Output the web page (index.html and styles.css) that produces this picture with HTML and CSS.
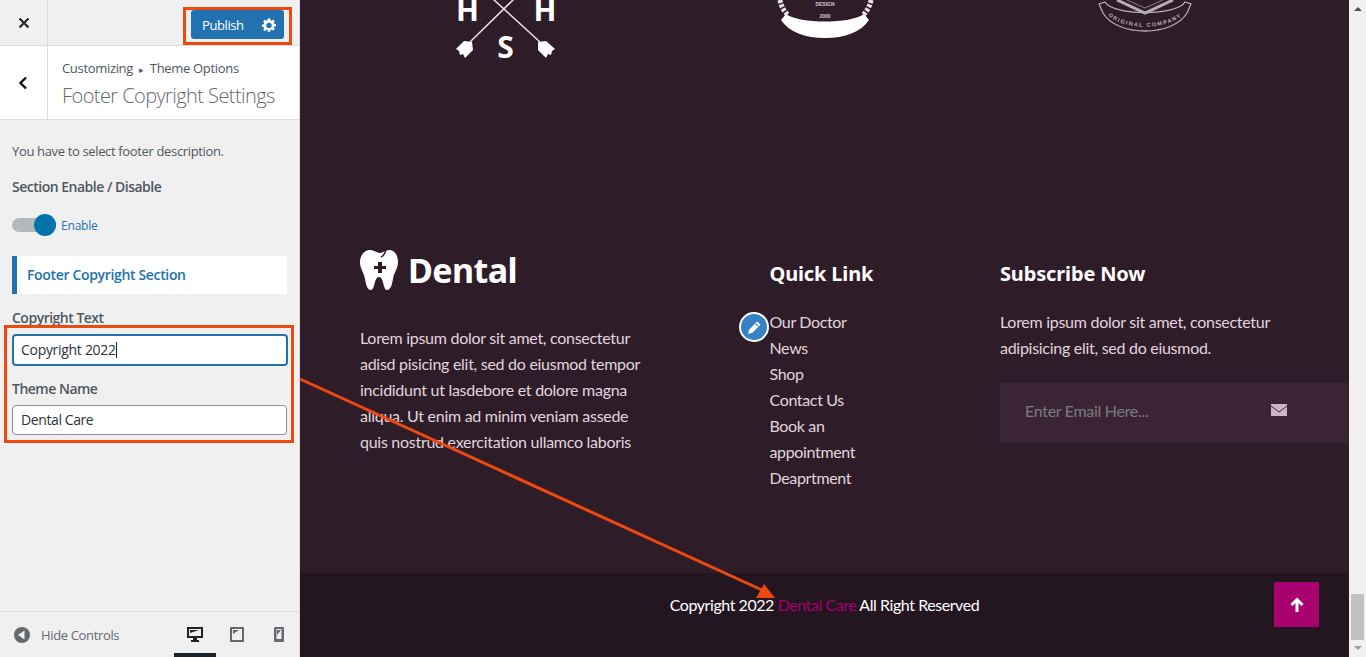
FILE: index.html
```html
<!DOCTYPE html>
<html>
<head>
  <meta charset="utf-8">
  <title>Customize: Footer Copyright Settings</title>
  <link rel="stylesheet" href="styles.css">
</head>
<body>
  <div class="app">

    <aside class="controls">
      <div class="topbar">
        <div class="close-box">
          <svg width="12" height="12" viewBox="0 0 12 12"><path d="M1.500 1.500l9 9M10.500 1.500l-9 9" stroke="#23282d" stroke-width="2.200" fill="none"/></svg>
        </div>
        <div class="publish">
          <span class="publish-text">Publish</span>
          <svg class="gear" width="14" height="14" viewBox="0 0 20 20"><path fill="#fff" fill-rule="evenodd" d="M8 0h4l.5 3 1.700.7L16.700 2l2.800 2.800-1.800 2.500.7 1.700 3 .5v4l-3 .5-.7 1.700 1.800 2.500-2.800 2.800-2.500-1.800-1.700.7-.5 3H8l-.5-3-1.700-.7L3.300 22 .5 19.200l1.800-2.500-.7-1.700-3-.5v-4l3-.5.7-1.700L.5 4.800 3.300 2l2.500 1.700L7.500 3z M10 7.500a4.500 4.500 0 1 0 0 9 4.500 4.500 0 0 0 0-9z" transform="translate(1.200 .8) scale(.88 .82)"/></svg>
        </div>
      </div>

      <div class="section-head">
        <div class="back-box">
          <svg width="10" height="14" viewBox="0 0 10 14"><path d="M8 1.500L2.500 7 8 12.500" stroke="#111" stroke-width="2.400" fill="none"/></svg>
        </div>
        <div class="section-title">
          <div class="crumbs">Customizing <span class="crumb-arrow">&#9656;</span> Theme Options</div>
          <div class="title">Footer Copyright Settings</div>
        </div>
      </div>

      <div class="panel">
        <p class="desc">You have to select footer description.</p>
        <div class="label label-first">Section Enable / Disable</div>
        <div class="toggle-row">
          <span class="toggle"><span class="knob"></span></span>
          <span class="toggle-text">Enable</span>
        </div>
        <div class="sub-head">Footer Copyright Section</div>
        <div class="label label-copy">Copyright Text</div>
        <div class="input input-focus">Copyright 2022<span class="caret"></span></div>
        <div class="label label-theme">Theme Name</div>
        <div class="input">Dental Care</div>
      </div>

      <div class="panel-foot">
        <svg width="16" height="16" viewBox="0 0 16 16"><circle cx="8" cy="8" r="8" fill="#646970"/><path d="M10.500 3.500v9L4 8z" fill="#f0f0f1"/></svg>
        <span class="hide-text">Hide Controls</span>
        <div class="devices">
          <div class="device device-on">
            <svg width="16" height="16" viewBox="0 0 16 16"><path fill="#1d2327" fill-rule="evenodd" d="M0 0h16v11H10v2h2v2H4v-2h2v-2H0z M2 2v7h12V2z"/><path fill="#1d2327" d="M3 3h9L3 6z"/></svg>
          </div>
          <div class="device">
            <svg width="14" height="15" viewBox="0 0 14 15"><path fill="#646970" fill-rule="evenodd" d="M0 0h14v15H0z M2 2v11h10V2z"/><path fill="#646970" d="M3 3h6L3 7z"/></svg>
          </div>
          <div class="device">
            <svg width="10" height="15" viewBox="0 0 10 15"><path fill="#646970" fill-rule="evenodd" d="M1 0h8a1 1 0 0 1 1 1v13a1 1 0 0 1-1 1H1a1 1 0 0 1-1-1V1a1 1 0 0 1 1-1z M2.500 2v10h5V2z"/><path fill="#646970" d="M3 3h4L3 8z"/></svg>
          </div>
        </div>
      </div>
    </aside>

    <main class="preview">
      <div class="logos">
        <svg class="logo" width="100" height="60" viewBox="0 0 100 60">
          <text class="logo-letter" x="12.500" y="21" text-anchor="middle">H</text>
          <text class="logo-letter" x="90" y="21" text-anchor="middle">H</text>
          <text class="logo-letter" x="50.500" y="58" text-anchor="middle">S</text>
          <path d="M60-2L15 42M38-1L85 42" stroke="#e9e4e7" stroke-width="1.500" fill="none"/>
          <path d="M17 42L9 41L1 49L4 51L5 55L8 54L10 58L18 50Z M83 42L91 41L100 49L97 51L96 55L93 54L91 58L83 50Z" fill="#fff"/>
        </svg>
        <svg class="logo" width="100" height="60" viewBox="0 0 100 60">
          <path d="M5 0c1 6 4 11 8 15M96 0c-1 6-4 11-8 15" stroke="#e9e4e7" stroke-width="5" stroke-dasharray="3 1.500" fill="none"/>
          <path d="M11 14C24 24 76 24 89 14L94 20C86 32 70 38 50 38C30 38 14 32 6 20Z" fill="#fff"/>
          <text class="logo-tiny" x="50" y="6" text-anchor="middle">DESIGN</text>
          <text class="logo-tiny" x="50" y="18" text-anchor="middle">2000</text>
        </svg>
        <svg class="logo" width="100" height="60" viewBox="0 0 100 60">
          <path d="M22 0l28 13L78 0" stroke="#b9aeb5" stroke-width="3" fill="none"/>
          <path d="M32 0l18 8 18-8" stroke="#8f808a" stroke-width="1" fill="none"/>
          <path d="M4 4l6-2c8 14 72 14 80 0l6 2-4 9c-14 24-70 24-84 0z" fill="none" stroke="#b9aeb5" stroke-width="1.300"/>
          <path id="badge-curve" d="M9 11c14 21 68 21 82 0" fill="none"/>
          <text class="logo-small"><textPath href="#badge-curve" startOffset="50%" text-anchor="middle">ORIGINAL COMPANY</textPath></text>
        </svg>
      </div>

      <div class="footer-main">
        <div class="about">
          <div class="brand">
            <svg width="38" height="40" viewBox="0 0 38 40"><path fill="#fff" d="M10 0C14 0 17 3 20 3C23 3 25 0 29 0C35 0 38 6 38 12C38 19 34 22 33 29C32 34 31 40 27 40C23 40 24 27 19 27C14 27 15 40 11 40C7 40 6 34 5 29C4 22 0 19 0 12C0 6 4 0 10 0Z"/><path fill="none" stroke="#2f1c29" stroke-width="1.500" d="M21 7C24 6 25 3 26 0"/><path fill="#2f1c29" d="M18 12h4v4h4v3h-4v4h-4v-4h-4v-3h4z"/></svg>
            <span class="brand-name">Dental</span>
          </div>
          <p class="about-text">Lorem ipsum dolor sit amet, consectetur adisd pisicing elit, sed do eiusmod tempor incididunt ut lasdebore et dolore magna aliqua. Ut enim ad minim veniam assede quis nostrud exercitation ullamco laboris</p>
        </div>

        <div class="links">
          <h3 class="col-head">Quick Link</h3>
          <ul class="link-list">
            <li>Our Doctor</li>
            <li>News</li>
            <li>Shop</li>
            <li>Contact Us</li>
            <li>Book an appointment</li>
            <li>Deaprtment</li>
          </ul>
        </div>

        <div class="subscribe">
          <h3 class="col-head">Subscribe Now</h3>
          <p class="sub-text">Lorem ipsum dolor sit amet, consectetur adipisicing elit, sed do eiusmod.</p>
          <div class="email-box">
            <span class="email-hint">Enter Email Here...</span>
            <svg width="16" height="12" viewBox="0 0 16 12"><path fill="#c9b8c4" d="M0 0h16v12H0z"/><path d="M0 2l8 6 8-6" fill="none" stroke="#3c2636" stroke-width="1"/></svg>
          </div>
        </div>
      </div>

      <div class="footer-bottom">Copyright 2022 <span class="pink">Dental Care</span> All Right Reserved</div>

      <div class="edit-dot">
        <svg width="15" height="15" viewBox="0 0 14 14"><path fill="#fff" d="M9.500 1.500l3 3-7.500 7.500-4 1 1-4z"/><path stroke="#3582c4" stroke-width="1" d="M8 3.500l2.500 2.500"/></svg>
      </div>
      <div class="to-top">
        <svg width="16" height="16" viewBox="0 0 16 16"><path d="M8 15V3M2.500 8L8 2.500 13.500 8" stroke="#fff" stroke-width="3" fill="none"/></svg>
      </div>
    </main>

    <div class="scrollbar">
      <div class="scroll-up"></div>
      <div class="scroll-thumb"></div>
      <div class="scroll-down"></div>
    </div>
  </div>

  <!-- red marks drawn over the screenshot -->
  <div class="mark mark-publish"></div>
  <div class="mark mark-inputs"></div>
  <svg class="mark-arrow" width="1366" height="657" viewBox="0 0 1366 657">
    <path d="M300 379L762 590" stroke="#ee4a10" stroke-width="3" fill="none"/>
    <path d="M775 598L756 598L764 584z" fill="#ee4a10"/>
  </svg>
</body>
</html>
```

FILE: styles.css
```css
* {
  box-sizing: border-box;
}
html, body {
  margin: 0;
  height: 100%;
  overflow: hidden;
}
.app {
  display: flex;
  height: 657px;
  font-family: "Open Sans", sans-serif;
}

/* left panel */
.controls {
  width: 300px;
  flex: none;
  display: flex;
  flex-direction: column;
  background: #f0f0f1;
  border-right: 1px solid #dcdcde;
  color: #50575e;
}
.topbar {
  height: 46px;
  display: flex;
  align-items: flex-start;
  border-bottom: 1px solid #dcdcde;
}
.close-box {
  width: 48px;
  height: 45px;
  border-right: 1px solid #dcdcde;
  display: flex;
  align-items: center;
  justify-content: center;
}
.publish {
  margin: 10px 0 0 143px;
  width: 93px;
  height: 29px;
  background: #2271b1;
  border-radius: 3px;
  color: #fff;
  font-size: 13px;
  letter-spacing: -0.4px;
  display: flex;
  align-items: center;
  padding-left: 11px;
}
.gear {
  margin-left: auto;
  margin-right: 8px;
}
.section-head {
  height: 74px;
  display: flex;
  background: #fff;
  border-bottom: 1px solid #dcdcde;
}
.back-box {
  width: 48px;
  border-right: 1px solid #dcdcde;
  padding-right: 2px;
  display: flex;
  align-items: center;
  justify-content: center;
}
.section-title {
  padding: 13px 0 0 14px;
}
.crumbs {
  font-size: 13px;
  line-height: 18px;
  letter-spacing: -0.32px;
  white-space: nowrap;
}
.crumb-arrow {
  font-size: 9px;
  margin: 0 3px;
}
.title {
  margin-top: 4px;
  font-size: 20px;
  font-weight: 300;
  line-height: 26px;
  letter-spacing: -0.57px;
  color: #646970;
  white-space: nowrap;
}
.panel {
  flex: 1;
  padding: 0 12px;
  font-size: 13px;
}
.desc {
  margin: 22px 0 0;
  line-height: 18px;
  letter-spacing: -0.35px;
}
.label {
  font-size: 14px;
  font-weight: 600;
  line-height: 18px;
  letter-spacing: -0.5px;
}
.label-first {
  margin-top: 18px;
}
.toggle-row {
  display: flex;
  align-items: center;
  height: 22px;
  margin-top: 18px;
}
.toggle {
  width: 44px;
  height: 14px;
  border-radius: 7px;
  background: #b4b9be;
  display: flex;
  align-items: center;
  justify-content: flex-end;
}
.knob {
  width: 22px;
  height: 22px;
  border-radius: 50%;
  background: #0073aa;
}
.toggle-text {
  margin-left: 5px;
  font-size: 12px;
  color: #2271b1;
  letter-spacing: -0.2px;
}
.sub-head {
  margin-top: 20px;
  width: 275px;
  height: 38px;
  line-height: 38px;
  background: #fff;
  border-left: 5px solid #2271b1;
  padding-left: 10px;
  color: #2271b1;
  font-size: 14px;
  font-weight: 600;
  letter-spacing: -0.34px;
}
.label-copy {
  margin-top: 15px;
}
.label-theme {
  margin-top: 14px;
}
.input {
  margin-top: 7px;
  width: 275px;
  height: 30px;
  line-height: 28px;
  padding-left: 8px;
  background: #fff;
  border: 1px solid #8c8f94;
  border-radius: 4px;
  font-size: 14px;
  letter-spacing: -0.4px;
  color: #2c3338;
}
.input-focus {
  height: 32px;
  width: 276px;
  border: 2px solid #2271b1;
  line-height: 28px;
  padding-left: 7px;
  letter-spacing: -0.3px;
}
.caret {
  display: inline-block;
  width: 1px;
  height: 16px;
  background: #1d2327;
  vertical-align: -3px;
}
.panel-foot {
  height: 46px;
  border-top: 1px solid #dcdcde;
  display: flex;
  align-items: center;
  padding-left: 14px;
  color: #646970;
  font-size: 13px;
  letter-spacing: -0.35px;
}
.hide-text {
  margin-left: 11px;
}
.devices {
  margin-left: auto;
  display: flex;
  height: 100%;
  margin-right: -1px;
}
.device {
  width: 42px;
  display: flex;
  align-items: center;
  justify-content: center;
}
.device-on {
  border-bottom: 4px solid #1d2327;
  padding-top: 4px;
}

/* site preview */
.preview {
  position: relative;
  width: 1049px;
  flex: none;
  display: flex;
  flex-direction: column;
  overflow: hidden;
  background: #2f1c29;
  color: #e0d6dc;
  font-family: "Lato", sans-serif;
  font-size: 16px;
}
.logos {
  height: 60px;
  flex: none;
  display: flex;
  justify-content: center;
  gap: 220px;
}
.logo-letter {
  font-family: "Noto Sans", sans-serif;
  font-size: 30px;
  font-weight: 700;
  fill: #fff;
}
.logo-tiny {
  font-family: "Liberation Sans", sans-serif;
  font-size: 5px;
  font-weight: 700;
  fill: #cfc8cc;
}
.logo-small {
  font-family: "Liberation Sans", sans-serif;
  font-size: 5.500px;
  font-weight: 700;
  fill: #b9aeb5;
  letter-spacing: 1.400px;
}
.footer-main {
  flex: 1;
  display: grid;
  grid-template-columns: 410px 230px 1fr;
  padding: 189px 0 0 60px;
}
.brand {
  display: flex;
  align-items: center;
  height: 42px;
}
.brand-name {
  margin-left: 10px;
  font-family: "Noto Sans", sans-serif;
  font-size: 34px;
  font-weight: 700;
  color: #fff;
  letter-spacing: -0.6px;
}
.about-text {
  margin: 34px 0 0;
  width: 285px;
  line-height: 26px;
  letter-spacing: -0.28px;
}
.col-head {
  margin: 10px 0 0;
  font-family: "Noto Sans", sans-serif;
  font-size: 20px;
  line-height: 30px;
  font-weight: 700;
  color: #fff;
  letter-spacing: -0.15px;
}
.links {
  margin-left: -0.5px;
}
.link-list {
  list-style: none;
  margin: 20px 0 0;
  padding: 0;
  width: 120px;
  line-height: 26px;
  letter-spacing: -0.35px;
}
.sub-text {
  margin: 20px 0 0;
  line-height: 26px;
  width: 290px;
  letter-spacing: -0.28px;
}
.email-box {
  margin-top: 22px;
  height: 60px;
  background: #3b2534;
  display: flex;
  align-items: center;
  padding: 0 62px 6px 25px;
  justify-content: space-between;
}
.email-hint {
  color: #7b7b7b;
  letter-spacing: -0.3px;
}
.footer-bottom {
  height: 84px;
  flex: none;
  background: #231621;
  color: #fff;
  text-align: center;
  line-height: 64px;
  letter-spacing: -0.44px;
}
.pink {
  color: #a6006e;
}
.edit-dot {
  position: absolute;
  left: 439px;
  top: 312px;
  width: 30px;
  height: 30px;
  border-radius: 50%;
  background: #3582c4;
  border: 2px solid #fff;
  display: flex;
  align-items: center;
  justify-content: center;
}
.to-top {
  position: absolute;
  left: 974px;
  top: 582px;
  width: 45px;
  height: 45px;
  background: #a8006f;
  display: flex;
  align-items: center;
  justify-content: center;
}

/* scrollbar */
.scrollbar {
  position: relative;
  width: 17px;
  flex: none;
  background: #f1f1f1;
}
.scroll-up {
  position: absolute;
  left: 5px;
  top: 7px;
  border-left: 4px solid transparent;
  border-right: 4px solid transparent;
  border-bottom: 4px solid #505050;
}
.scroll-thumb {
  position: absolute;
  left: 2px;
  top: 594px;
  width: 13px;
  height: 46px;
  background: #c1c1c1;
}
.scroll-down {
  position: absolute;
  left: 5px;
  top: 646px;
  border-left: 4px solid transparent;
  border-right: 4px solid transparent;
  border-top: 4px solid #a0a0a0;
}

/* annotations */
.mark {
  position: absolute;
  border: 3px solid #ee4a10;
}
.mark-publish {
  left: 183px;
  top: 7px;
  width: 109px;
  height: 38px;
}
.mark-inputs {
  left: 4px;
  top: 325px;
  width: 290px;
  height: 118px;
}
.mark-arrow {
  position: absolute;
  left: 0;
  top: 0;
  pointer-events: none;
}
```
